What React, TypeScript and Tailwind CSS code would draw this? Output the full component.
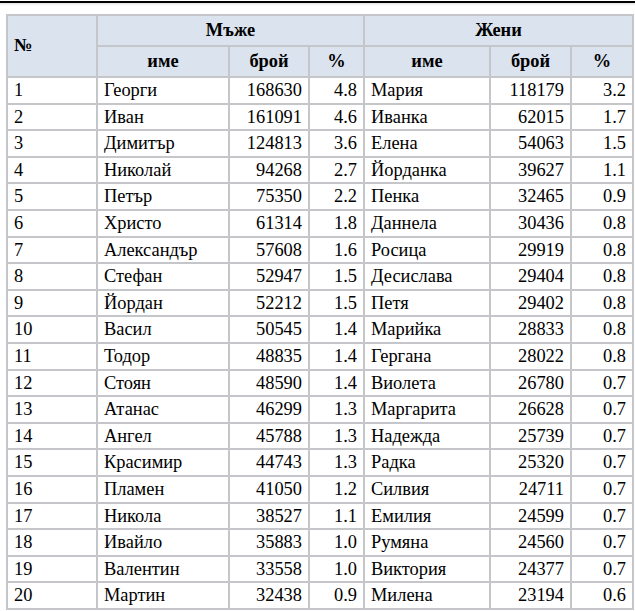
const rows: [number, string, number, string, string, number, string][] = [
  [1, 'Георги', 168630, '4.8', 'Мария', 118179, '3.2'],
  [2, 'Иван', 161091, '4.6', 'Иванка', 62015, '1.7'],
  [3, 'Димитър', 124813, '3.6', 'Елена', 54063, '1.5'],
  [4, 'Николай', 94268, '2.7', 'Йорданка', 39627, '1.1'],
  [5, 'Петър', 75350, '2.2', 'Пенка', 32465, '0.9'],
  [6, 'Христо', 61314, '1.8', 'Даннела', 30436, '0.8'],
  [7, 'Александър', 57608, '1.6', 'Росица', 29919, '0.8'],
  [8, 'Стефан', 52947, '1.5', 'Десислава', 29404, '0.8'],
  [9, 'Йордан', 52212, '1.5', 'Петя', 29402, '0.8'],
  [10, 'Васил', 50545, '1.4', 'Марийка', 28833, '0.8'],
  [11, 'Тодор', 48835, '1.4', 'Гергана', 28022, '0.8'],
  [12, 'Стоян', 48590, '1.4', 'Виолета', 26780, '0.7'],
  [13, 'Атанас', 46299, '1.3', 'Маргарита', 26628, '0.7'],
  [14, 'Ангел', 45788, '1.3', 'Надежда', 25739, '0.7'],
  [15, 'Красимир', 44743, '1.3', 'Радка', 25320, '0.7'],
  [16, 'Пламен', 41050, '1.2', 'Силвия', 24711, '0.7'],
  [17, 'Никола', 38527, '1.1', 'Емилия', 24599, '0.7'],
  [18, 'Ивайло', 35883, '1.0', 'Румяна', 24560, '0.7'],
  [19, 'Валентин', 33558, '1.0', 'Виктория', 24377, '0.7'],
  [20, 'Мартин', 32438, '0.9', 'Милена', 23194, '0.6'],
]

const serif = "font-['Liberation_Serif','Times_New_Roman',serif]"
const th = `${serif} border-2 border-[#c4c6c9] bg-[#dbe3ef] font-bold px-[6px] text-[18.4px] text-black`
const td = `${serif} border-2 border-[#c4c6c9] px-[6px] h-[26.6px] leading-none text-[18.4px] text-black`

export default function App() {
  return (
    <div className={`min-h-[611px] bg-white ${serif} text-[18.4px] text-black`}>
      <div className="h-[2px] bg-black mt-px" />
      <div className="h-[3px] bg-gradient-to-b from-[#e4e4e4] to-white" />
      <div className="pl-[6px] pt-[8px]">
        <table className={`table-fixed border-collapse w-[626px] border-2 border-[#b6b8bb] ${serif}`}>
          <colgroup>
            <col className="w-[90px]" />
            <col className="w-[132px]" />
            <col className="w-[80px]" />
            <col className="w-[55px]" />
            <col className="w-[126px]" />
            <col className="w-[81px]" />
            <col className="w-[62px]" />
          </colgroup>
          <thead>
            <tr className="h-[31px]">
              <th rowSpan={2} className={`${th} text-left`}>№</th>
              <th colSpan={3} className={`${th} text-center`}>Мъже</th>
              <th colSpan={3} className={`${th} text-center`}>Жени</th>
            </tr>
            <tr className="h-[31px]">
              <th className={th}>име</th>
              <th className={th}>брой</th>
              <th className={th}>%</th>
              <th className={th}>име</th>
              <th className={th}>брой</th>
              <th className={th}>%</th>
            </tr>
          </thead>
          <tbody>
            {rows.map((r) => (
              <tr key={r[0]}>
                <td className={td}>{r[0]}</td>
                <td className={td}>{r[1]}</td>
                <td className={`${td} text-right`}>{r[2]}</td>
                <td className={`${td} text-right`}>{r[3]}</td>
                <td className={td}>{r[4]}</td>
                <td className={`${td} text-right`}>{r[5]}</td>
                <td className={`${td} text-right`}>{r[6]}</td>
              </tr>
            ))}
          </tbody>
        </table>
      </div>
    </div>
  )
}
